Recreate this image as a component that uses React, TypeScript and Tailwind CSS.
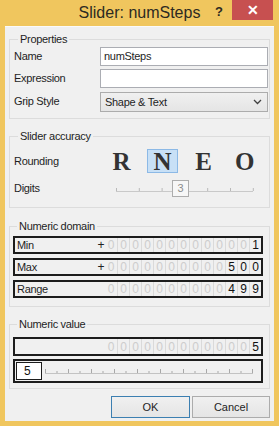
import React from "react";

const ui = "font-['Liberation_Sans',Arial,sans-serif]";

function Cells({ value, count, sign }: { value: string; count: number; sign?: string }) {
  const padded = value.padStart(count, "0");
  const firstSig = count - value.length;
  return (
    <div className="flex h-full items-center">
      <span className="w-[8px] text-center text-[12px] text-[#222]">{sign ?? ""}</span>
      {padded.split("").map((d, i) => (
        <span
          key={i}
          className={
            "flex h-full w-[12px] items-center justify-center text-[12px] " +
            (i > 0 ? "border-l border-[#dadada] " : "") +
            (i >= firstSig ? "text-[#111]" : "text-[#cdcdcd]")
          }
        >
          {d}
        </span>
      ))}
    </div>
  );
}

function DigitRow({ label, value, sign }: { label: string; value: string; sign?: string }) {
  return (
    <div className="flex h-[18px] items-center border-2 border-[#1c1c1c] pl-[2px]">
      <span className="flex-1 text-[11px] tracking-[-0.3px] text-[#1e1e1e]">{label}</span>
      <Cells value={value} count={13} sign={sign} />
    </div>
  );
}

function Group({ title, className, children }: { title: string; className?: string; children: React.ReactNode }) {
  return (
    <fieldset className={"border border-[#dcdcdc] " + (className ?? "")}>
      <legend className="ml-[4px] px-[2px] text-[11px] leading-[14px] tracking-[-0.3px] text-[#1e1e1e]">{title}</legend>
      {children}
    </fieldset>
  );
}

function Letter({ ch, selected }: { ch: string; selected?: boolean }) {
  return (
    <div
      className={
        "flex h-[24px] w-[31px] items-center justify-center border font-['Liberation_Serif',serif] text-[25px] font-bold leading-none text-[#333] " +
        (selected ? "border-[#8cb9e6] bg-[#c8e0f6]" : "border-transparent")
      }
    >
      {ch}
    </div>
  );
}

function DigitsSlider() {
  const ticks = [0, 1, 2, 3, 4, 5, 6];
  return (
    <div className="relative h-[19px] w-[140px]">
      <svg width="140" height="19" className="absolute left-0 top-0">
        <line x1="1" y1="12.5" x2="138" y2="12.5" stroke="#c9c9c9" />
        {ticks.map((t) => (
          <line key={t} x1={1.5 + t * 22.8} y1="9" x2={1.5 + t * 22.8} y2="12" stroke="#b9b9b9" />
        ))}
      </svg>
      <div className="absolute left-[57px] top-[1px] flex h-[17px] w-[17px] items-center justify-center border border-[#adadad] bg-[#f7f7f7] text-[11px] text-[#8c8c8c]">
        3
      </div>
    </div>
  );
}

function ValueSlider() {
  const ticks = Array.from({ length: 19 }, (_, i) => i);
  return (
    <svg width="216" height="20">
      <line x1="3" y1="12.5" x2="211" y2="12.5" stroke="#c3c3c3" />
      {ticks.map((t) => (
        <line
          key={t}
          x1={3.5 + t * 11.5}
          y1={t % 2 === 0 ? 8 : 10}
          x2={3.5 + t * 11.5}
          y2="12"
          stroke="#a8a8a8"
        />
      ))}
    </svg>
  );
}

export default function App() {
  return (
    <div className={"flex h-[426px] w-[279px] flex-col bg-[#f0c65e] " + ui}>
      <div className="relative flex h-[26px] items-center justify-center">
        <span className="text-[16px] text-[#2d2a22]">Slider: numSteps</span>
        <span className="absolute left-[215px] top-[2px] text-[13px] font-bold text-[#2d2a22]">?</span>
        <div className="absolute right-[6px] top-0 flex h-[20px] w-[41px] items-center justify-center bg-[#c75050] text-[14px] font-bold text-white">
          ✕
        </div>
      </div>
      <div className="ml-[5px] mr-[5px] mb-[5px] flex flex-1 flex-col border-t border-[#fafafa] bg-[#f0f0f0] px-[4px]">
        <Group title="Properties" className="mt-[5px] pb-[6px] pl-[4px] pr-[1px]">
          <div className="mt-[1px] grid grid-cols-[86px_1fr] items-center gap-y-[3px] text-[11px] tracking-[-0.3px] text-[#1e1e1e]">
            <span>Name</span>
            <div className="flex h-[19px] items-center border border-[#abadb3] bg-white px-[3px]">numSteps</div>
            <span>Expression</span>
            <div className="h-[19px] border border-[#abadb3] bg-white" />
            <span>Grip Style</span>
            <div className="mt-[1px] flex h-[20px] items-center justify-between border border-[#acacac] bg-gradient-to-b from-[#f0f0f0] to-[#e5e5e5] pl-[4px] pr-[5px]">
              <span>Shape &amp; Text</span>
              <svg width="9" height="6" viewBox="0 0 9 6">
                <path d="M1 1 L4.5 4.5 L8 1" fill="none" stroke="#404040" strokeWidth="1.3" />
              </svg>
            </div>
          </div>
        </Group>

        <Group title="Slider accuracy" className="mt-[10px] pb-[9px] pl-[4px]">
          <div className="mt-[6px] flex h-[24px] items-center text-[11px] tracking-[-0.3px] text-[#1e1e1e]">
            <span className="w-[92px]">Rounding</span>
            <div className="flex gap-[10px]">
              <Letter ch="R" />
              <Letter ch="N" selected />
              <Letter ch="E" />
              <Letter ch="O" />
            </div>
          </div>
          <div className="mt-[6px] flex h-[19px] items-center text-[11px] tracking-[-0.3px] text-[#1e1e1e]">
            <span className="w-[101px]">Digits</span>
            <DigitsSlider />
          </div>
        </Group>

        <Group title="Numeric domain" className="mt-[11px] pb-[8px] pl-[3px] pr-[6px]">
          <div className="mt-[3px] flex flex-col gap-[4px]">
            <DigitRow label="Min" value="1" sign="+" />
            <DigitRow label="Max" value="500" sign="+" />
            <DigitRow label="Range" value="499" />
          </div>
        </Group>

        <Group title="Numeric value" className="mt-[10px] pb-[5px] pl-[3px] pr-[6px]">
          <div className="mt-[6px] flex flex-col gap-[3px]">
            <div className="flex h-[19px] items-center justify-end border-2 border-[#1c1c1c]">
              <Cells value="5" count={13} />
            </div>
            <div className="flex h-[24px] items-center border-2 border-[#1c1c1c] pl-[1px]">
              <div className="flex h-[18px] w-[26px] shrink-0 items-center border border-[#1c1c1c] bg-white pl-[7px] text-[12px] text-[#111]">
                5
              </div>
              <ValueSlider />
            </div>
          </div>
        </Group>

        <div className="mt-[7px] flex justify-end gap-[2px] text-[11px] text-[#1e1e1e]">
          <div className="flex h-[22px] w-[79px] items-center justify-center border border-[#3c7fb1] bg-gradient-to-b from-[#f0f0f0] to-[#e5e5e5]">
            OK
          </div>
          <div className="flex h-[22px] w-[78px] items-center justify-center border border-[#acacac] bg-gradient-to-b from-[#f0f0f0] to-[#e5e5e5]">
            Cancel
          </div>
        </div>
      </div>
    </div>
  );
}
